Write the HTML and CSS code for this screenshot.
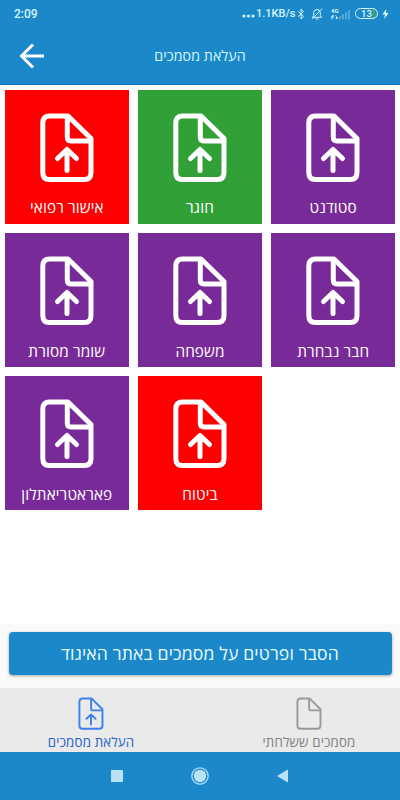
FILE: index.html
```html
<!DOCTYPE html>
<html lang="he" dir="rtl">
<head>
<meta charset="utf-8">
<meta name="viewport" content="width=device-width, initial-scale=1">
<title>העלאת מסמכים</title>
<link rel="stylesheet" href="styles.css">
</head>
<body>
<svg class="defs" aria-hidden="true">
  <symbol id="page" viewBox="0 0 54 69">
    <path d="M9.5 3H28L51 25.500V59.500Q51 66.500 44 66.500H9.500Q2.800 66.500 2.800 59.500V10Q2.800 3 9.500 3Z"/>
    <path d="M27.300 4V24Q27.300 28 31 28H50"/>
  </symbol>
  <symbol id="upload" viewBox="0 0 54 69">
    <use href="#page" width="54" height="69"/>
    <path d="M27 57.500V37.500M17.500 45.500L27 36.500L36.500 45.500"/>
  </symbol>
</svg>
<div class="screen">
  <div class="status" dir="ltr">
    <span class="time">2:09</span>
    <svg class="dots" viewBox="0 0 13 4"><circle cx="2" cy="2" r="1.6"/><circle cx="6.500" cy="2" r="1.6"/><circle cx="11" cy="2" r="1.6"/></svg>
    <span class="speed">1.1KB/s</span>
    <svg class="bt" viewBox="0 0 8 12"><path d="M1 3.300L6.500 8.500L4 11V1L6.500 3.500L1 8.700"/></svg>
    <svg class="bell" viewBox="0 0 12 12"><path d="M1.500 9.300H10.500L9.300 7.500V4.500Q9 1.500 6 1.500Q3 1.500 2.700 4.500V7.500ZM4.700 11H7.300M1 11.300L11 .7"/></svg>
    <svg class="signal" viewBox="0 0 20 12"><text x="1" y="4.500">4G</text><path class="on" d="M2 8V11M2 8H4M6.500 11V9"/><path class="mid" d="M5.500 7L8 11"/><path class="off" d="M10 8V11.500M13 6V11.500M16 4V11.500M19 2V11.500"/></svg>
    <span class="battery"><span>13</span></span>
    <svg class="bolt" viewBox="0 0 7 11"><path d="M4.500 0L0 6H3L2 11L7 4.500H4Z"/></svg>
  </div>
  <header class="bar" dir="ltr">
    <svg class="back" viewBox="0 0 26 26"><path d="M25 13H3M14 1.500L2.500 13L14 24.500"/></svg>
    <h1>העלאת מסמכים</h1>
  </header>
  <main class="grid" dir="ltr">
    <div class="tile red"><svg><use href="#upload"/></svg><span>אישור רפואי</span></div>
    <div class="tile green"><svg><use href="#upload"/></svg><span>חוגר</span></div>
    <div class="tile"><svg><use href="#upload"/></svg><span>סטודנט</span></div>
    <div class="tile"><svg><use href="#upload"/></svg><span>שומר מסורת</span></div>
    <div class="tile"><svg><use href="#upload"/></svg><span>משפחה</span></div>
    <div class="tile"><svg><use href="#upload"/></svg><span>חבר נבחרת</span></div>
    <div class="tile"><svg><use href="#upload"/></svg><span>פאראטריאתלון</span></div>
    <div class="tile red"><svg><use href="#upload"/></svg><span>ביטוח</span></div>
  </main>
  <div class="action"><button>הסבר ופרטים על מסמכים באתר האיגוד</button></div>
  <nav class="tabs" dir="ltr">
    <div class="tab active"><svg><use href="#upload"/></svg><span>העלאת מסמכים</span></div>
    <div class="tab sent"><svg><use href="#page"/></svg><span>מסמכים ששלחתי</span></div>
  </nav>
  <footer class="system" dir="ltr">
    <svg viewBox="0 0 20 20"><rect x="4" y="4" width="12" height="12" rx=".7"/></svg>
    <svg viewBox="0 0 20 20"><circle class="ring" cx="10" cy="10" r="8.200"/><circle cx="10" cy="10" r="6.200"/></svg>
    <svg viewBox="0 0 20 20"><path d="M4 10L15 3.500V16.500Z"/></svg>
  </footer>
</div>
</body>
</html>
```
FILE: styles.css
```css
* { box-sizing: border-box; }
body {
  margin: 0;
  font-family: "Open Sans", "Noto Sans", sans-serif;
  background: #fff;
}
svg { display: block; fill: none; flex: none; }
.defs { position: absolute; width: 0; height: 0; }
.screen {
  width: 400px;
  height: 800px;
  display: flex;
  flex-direction: column;
  overflow: hidden;
}
.status {
  height: 27px;
  display: flex;
  align-items: center;
  padding: 0 11px 0 14px;
  background: #1a88c9;
  color: #d8f7ff;
  font: 500 12px Roboto, sans-serif;
  stroke: #d8f7ff;
}
.time { margin-right: auto; }
.dots { width: 13px; height: 4px; margin: 5px 1px 0 0; fill: #d8f7ff; stroke: none; }
.speed { font-size: 11px; width: 38px; white-space: nowrap; }
.bt { width: 8px; height: 12px; margin-left: 3px; }
.bell { width: 12px; height: 12px; margin-left: 6px; }
.signal { width: 20px; height: 12px; margin-left: 7px; }
.signal text { font: 700 6px Roboto, sans-serif; fill: #d8f7ff; stroke: none; }
.signal .on { stroke-width: 1.3; }
.signal .mid { opacity: .6; }
.signal .off { stroke-width: 1.7; opacity: .35; }
.battery {
  width: 23px;
  height: 11px;
  margin-left: 5px;
  border: 1px solid #d8f7ff;
  border-radius: 6px;
  display: flex;
  align-items: center;
  justify-content: center;
  background: linear-gradient(90deg, transparent 78%, #36a765 78% 92%, transparent 92%);
  font-size: 9.500px;
  line-height: 9px;
}
.bolt { width: 7px; height: 10px; margin-left: 4px; fill: #d8f7ff; stroke: none; }
.bar {
  height: 58px;
  display: grid;
  grid-template-columns: 60px 1fr 60px;
  align-items: center;
  background: #1a88c9;
  border-bottom: 1px solid #1271b5;
  color: #d8f7ff;
}
.bar h1 {
  margin: 0;
  text-align: center;
  font-size: 14.200px;
  letter-spacing: .1px;
  font-weight: 400;
  line-height: 20px;
}
.back {
  width: 26px;
  height: 26px;
  margin-left: 19px;
  stroke: #fff;
  stroke-width: 3;
}
.grid {
  flex: 1;
  display: grid;
  grid-template-columns: repeat(3, 124.300px);
  grid-auto-rows: 134px;
  gap: 9.200px 8.900px;
  padding: 4.700px 4.700px 0;
}
.tile {
  display: flex;
  flex-direction: column;
  align-items: center;
  padding-top: 23.300px;
  background: #792a99;
  color: #fff;
  font-size: 15.300px;
  letter-spacing: .13px;
  line-height: 20px;
  white-space: nowrap;
}
.red { background: #f00; }
.green { background: #30a037; }
.tile svg {
  width: 54px;
  height: 69px;
  stroke: #fff;
  stroke-width: 5;
  stroke-linecap: round;
  stroke-linejoin: round;
}
.tile span { margin-top: 15.500px; }
.action { height: 64px; padding: 8px 8.500px 0; background: #fafafa; }
.action button {
  display: block;
  width: 100%;
  height: 43px;
  padding: 0;
  border: 0;
  border-radius: 4px;
  background: #1a88c9;
  color: #e8fbff;
  font: 400 17.600px/43px "Open Sans", sans-serif;
  letter-spacing: .15px;
  box-shadow: 0 1px 3px rgba(0, 0, 0, .35);
}
.tabs {
  height: 64px;
  display: flex;
  background: #eaeaea;
}
.tab {
  flex: 1;
  display: flex;
  flex-direction: column;
  align-items: center;
  padding-top: 9px;
  color: #828282;
  font-size: 13.300px;
  letter-spacing: .15px;
  line-height: 18px;
  stroke: #999;
}
.tab.active { color: #2861cd; stroke: #3b80ec; padding-right: 18px; }
.tab.sent { padding-left: 18px; }
.tab svg {
  width: 26px;
  height: 33px;
  stroke-width: 4;
  stroke-linecap: round;
  stroke-linejoin: round;
}
.tab span { margin-top: 3px; }
.system {
  height: 48px;
  display: flex;
  align-items: center;
  justify-content: center;
  gap: 63px;
  background: #1a88c9;
}
.system svg { width: 20px; height: 20px; fill: #b9e2f7; }
.system .ring { fill: none; stroke: #b9e2f7; stroke-width: 1.2; }
```
